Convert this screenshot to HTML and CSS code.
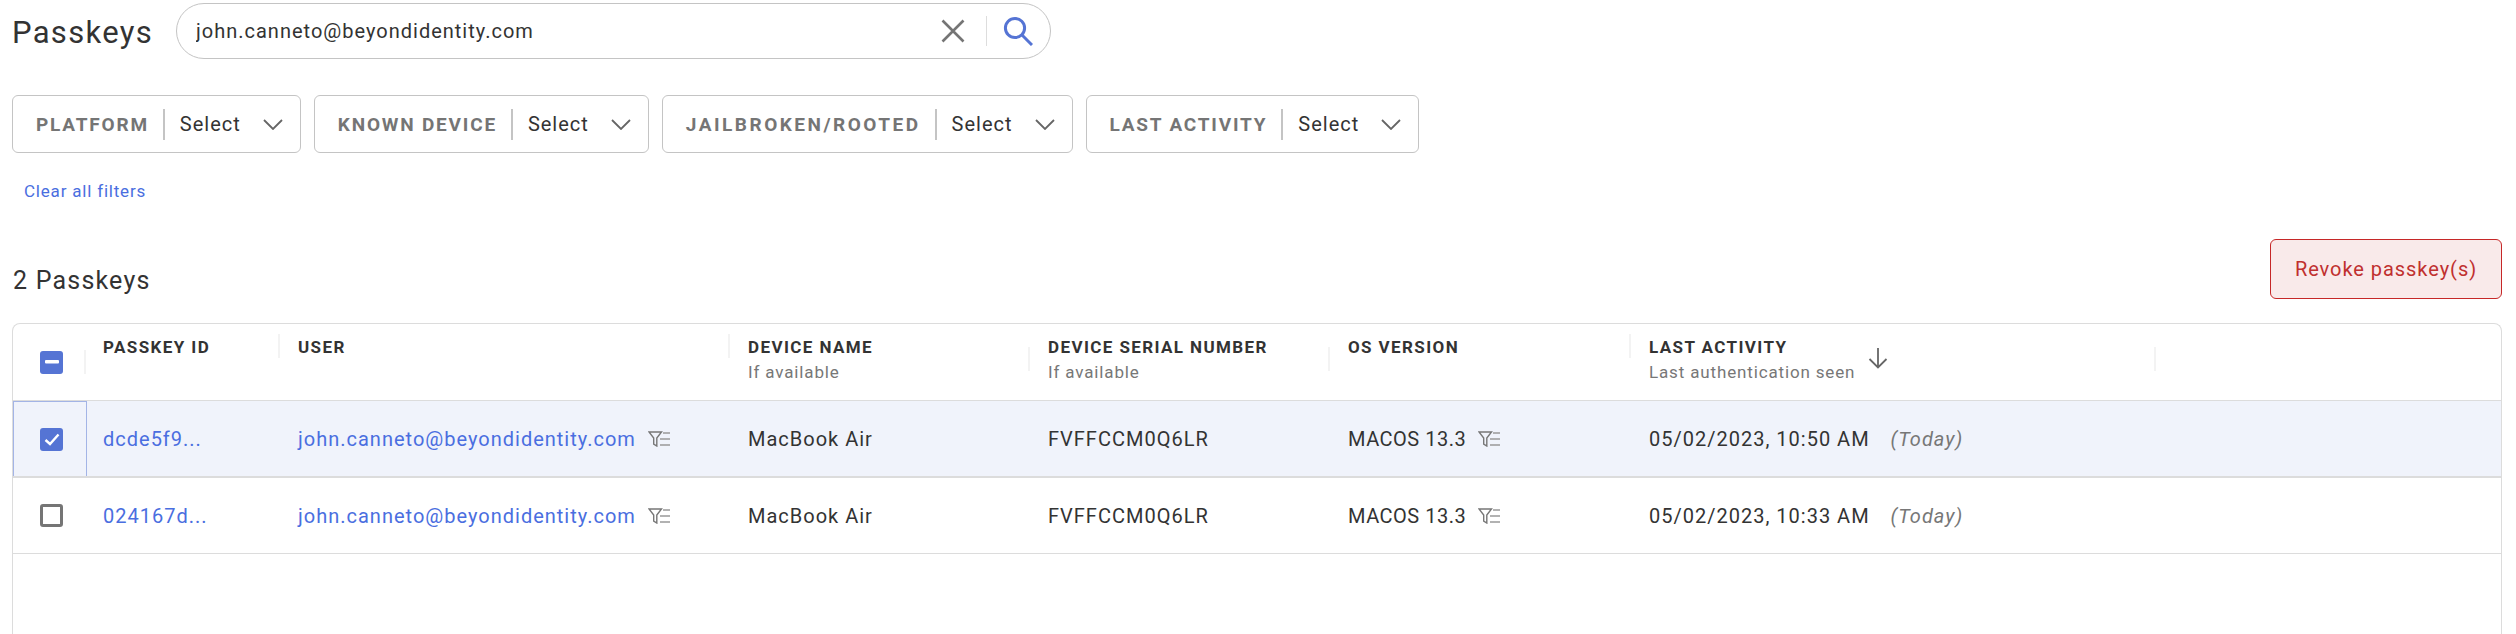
FILE: index.html
```html
<!DOCTYPE html>
<html>
<head>
  <title>Passkeys</title>
  <link rel="stylesheet" href="styles.css">
</head>
<body>
  <div id="page">
    <div class="top-row">
      <h1 class="page-title">Passkeys</h1>
      <div class="search">
        <input class="search-input" type="text" value="john.canneto@beyondidentity.com">
        <svg class="icon-clear" width="24" height="24" viewBox="0 0 24 24"><path d="M1.5 1.5L22.5 22.5M22.5 1.5L1.5 22.5" fill="none" stroke="#757575" stroke-width="2.6"/></svg>
        <span class="search-divider"></span>
        <svg class="icon-search" width="30" height="30" viewBox="0 0 30 30"><circle cx="12" cy="12" r="9.6" fill="none" stroke="#5574d4" stroke-width="3"/><path d="M19 19L29 29" fill="none" stroke="#5574d4" stroke-width="3"/></svg>
      </div>
    </div>

    <div class="filters">
      <div class="filter">
        <span class="filter-label">PLATFORM</span>
        <span class="filter-value">Select</span>
        <svg class="chevron" width="20" height="11" viewBox="0 0 20 11"><path d="M1 1L10 10L19 1" fill="none" stroke="#666" stroke-width="1.8"/></svg>
      </div>
      <div class="filter">
        <span class="filter-label">KNOWN DEVICE</span>
        <span class="filter-value">Select</span>
        <svg class="chevron" width="20" height="11" viewBox="0 0 20 11"><path d="M1 1L10 10L19 1" fill="none" stroke="#666" stroke-width="1.8"/></svg>
      </div>
      <div class="filter">
        <span class="filter-label filter-label-wide">JAILBROKEN/ROOTED</span>
        <span class="filter-value">Select</span>
        <svg class="chevron" width="20" height="11" viewBox="0 0 20 11"><path d="M1 1L10 10L19 1" fill="none" stroke="#666" stroke-width="1.8"/></svg>
      </div>
      <div class="filter">
        <span class="filter-label">LAST ACTIVITY</span>
        <span class="filter-value">Select</span>
        <svg class="chevron" width="20" height="11" viewBox="0 0 20 11"><path d="M1 1L10 10L19 1" fill="none" stroke="#666" stroke-width="1.8"/></svg>
      </div>
    </div>

    <a class="clear-link" href="#">Clear all filters</a>

    <div class="list-head">
      <h2 class="list-title">2 Passkeys</h2>
      <button class="revoke-btn">Revoke passkey(s)</button>
    </div>

    <div class="table">
      <div class="row head-row">
        <div class="cell check-cell sep sep-check">
          <span class="box box-on"><svg width="14" height="4" viewBox="0 0 14 4"><rect width="14" height="3.4" rx="1" fill="#fff"/></svg></span>
        </div>
        <div class="cell head-cell sep sep-top"><div class="head-name">PASSKEY ID</div></div>
        <div class="cell head-cell sep sep-top"><div class="head-name">USER</div></div>
        <div class="cell head-cell sep sep-mid"><div class="head-name">DEVICE NAME</div><div class="head-sub">If available</div></div>
        <div class="cell head-cell sep sep-mid"><div class="head-name">DEVICE SERIAL NUMBER</div><div class="head-sub">If available</div></div>
        <div class="cell head-cell sep sep-top"><div class="head-name">OS VERSION</div></div>
        <div class="cell head-cell sep sep-mid head-sort">
          <div><div class="head-name">LAST ACTIVITY</div><div class="head-sub">Last authentication seen</div></div>
          <svg class="icon-sort" width="20" height="21" viewBox="0 0 20 21"><path d="M10 0V19.5M1.5 11L10 19.5L18.5 11" fill="none" stroke="#666" stroke-width="1.8"/></svg>
        </div>
      </div>

      <div class="row data-row row-selected">
        <div class="cell check-cell check-focus">
          <span class="box box-on"><svg width="16" height="13" viewBox="0 0 16 13"><path d="M1.5 7L6 11L14.5 1.5" fill="none" stroke="#fff" stroke-width="2.4"/></svg></span>
        </div>
        <div class="cell data-cell"><a class="link" href="#">dcde5f9...</a></div>
        <div class="cell data-cell">
          <a class="link" href="#">john.canneto@beyondidentity.com</a>
          <svg class="icon-filter" width="22" height="16" viewBox="0 0 22 16"><path d="M1 1H13.5L8.8 7V15L5.7 13V7Z" fill="none" stroke="#777" stroke-width="1.4"/><path d="M15 2H22M12 8H22M12 14H22" fill="none" stroke="#999" stroke-width="1.4"/></svg>
        </div>
        <div class="cell data-cell">MacBook Air</div>
        <div class="cell data-cell">FVFFCCM0Q6LR</div>
        <div class="cell data-cell">
          <span class="os-value">MACOS 13.3</span>
          <svg class="icon-filter" width="22" height="16" viewBox="0 0 22 16"><path d="M1 1H13.5L8.8 7V15L5.7 13V7Z" fill="none" stroke="#777" stroke-width="1.4"/><path d="M15 2H22M12 8H22M12 14H22" fill="none" stroke="#999" stroke-width="1.4"/></svg>
        </div>
        <div class="cell data-cell"><span>05/02/2023, 10:50 AM</span><em class="today">(Today)</em></div>
      </div>

      <div class="row data-row">
        <div class="cell check-cell"><span class="box box-off"></span></div>
        <div class="cell data-cell"><a class="link" href="#">024167d...</a></div>
        <div class="cell data-cell">
          <a class="link" href="#">john.canneto@beyondidentity.com</a>
          <svg class="icon-filter" width="22" height="16" viewBox="0 0 22 16"><path d="M1 1H13.5L8.8 7V15L5.7 13V7Z" fill="none" stroke="#777" stroke-width="1.4"/><path d="M15 2H22M12 8H22M12 14H22" fill="none" stroke="#999" stroke-width="1.4"/></svg>
        </div>
        <div class="cell data-cell">MacBook Air</div>
        <div class="cell data-cell">FVFFCCM0Q6LR</div>
        <div class="cell data-cell">
          <span class="os-value">MACOS 13.3</span>
          <svg class="icon-filter" width="22" height="16" viewBox="0 0 22 16"><path d="M1 1H13.5L8.8 7V15L5.7 13V7Z" fill="none" stroke="#777" stroke-width="1.4"/><path d="M15 2H22M12 8H22M12 14H22" fill="none" stroke="#999" stroke-width="1.4"/></svg>
        </div>
        <div class="cell data-cell"><span>05/02/2023, 10:33 AM</span><em class="today">(Today)</em></div>
      </div>
    </div>
  </div>
</body>
</html>
```

FILE: styles.css
```css
html, body {
  margin: 0;
  height: 100%;
  overflow: hidden;
  background: #fff;
}

body {
  font-family: Roboto, "Liberation Sans", sans-serif;
  color: #333;
}

#page {
  padding: 3px 14px 0 12px;
}

.top-row {
  display: flex;
  align-items: center;
}

.page-title {
  margin: 0;
  width: 164px;
  padding-top: 2px;
  font-size: 31px;
  font-weight: 400;
  letter-spacing: 1.3px;
  color: #333;
}

.search {
  display: flex;
  align-items: center;
  box-sizing: border-box;
  width: 875px;
  height: 56px;
  border: 1px solid #c4c4c4;
  border-radius: 28px;
  padding-left: 19px;
}

.search-input {
  flex: 1;
  min-width: 0;
  border: none;
  outline: none;
  padding: 0;
  background: none;
  font-family: inherit;
  font-size: 20px;
  letter-spacing: 1px;
  color: #333;
}

.search-divider {
  width: 1px;
  height: 30px;
  margin: 0 16px 0 21px;
  background: #ddd;
}

.icon-search {
  margin-right: 17px;
}

.filters {
  display: flex;
  gap: 13px;
  margin-top: 36px;
}

.filter {
  display: flex;
  align-items: center;
  box-sizing: border-box;
  height: 58px;
  border: 1px solid #c4c4c4;
  border-radius: 6px;
  padding: 0 17px 0 23px;
}

.filter-label {
  padding-right: 14px;
  border-right: 2px solid #c4c4c4;
  line-height: 31px;
  font-size: 19px;
  font-weight: 700;
  letter-spacing: 1.8px;
  color: #757575;
}

.filter-label-wide {
  letter-spacing: 2.5px;
}

.filter-value {
  margin: 0 22px 0 15px;
  font-size: 20px;
  letter-spacing: 1px;
  color: #333;
}

.clear-link {
  display: block;
  margin: 28px 0 0 12px;
  line-height: 20px;
  font-size: 17px;
  letter-spacing: 0.8px;
  color: #4a6ee0;
  text-decoration: none;
}

.list-head {
  display: flex;
  justify-content: space-between;
  align-items: flex-end;
  margin-top: 38px;
}

.list-title {
  margin: 0 0 1px 1px;
  line-height: 34px;
  font-size: 25px;
  font-weight: 400;
  letter-spacing: 1.2px;
  color: #333;
}

.revoke-btn {
  box-sizing: border-box;
  width: 232px;
  height: 60px;
  border: 1px solid #c62828;
  border-radius: 6px;
  background: #f9eaea;
  font-family: inherit;
  font-size: 20px;
  letter-spacing: 0.95px;
  color: #c0302f;
}

.table {
  margin-top: 24px;
  height: 311px;
  border: 1px solid #dcdcdc;
  border-bottom: none;
  border-radius: 8px 8px 0 0;
}

.row {
  display: grid;
  grid-template-columns: 74px 198px 450px 300px 300px 301px 520px;
}

.head-row {
  height: 76px;
  border-bottom: 1px solid #dcdcdc;
}

.data-row {
  height: 75px;
  border-bottom: 1px solid #dcdcdc;
}

.row-selected {
  background: #f0f3fb;
  border-bottom-width: 2px;
}

.cell {
  box-sizing: border-box;
  position: relative;
  padding-left: 13px;
}

.check-cell {
  display: flex;
  align-items: center;
  padding-left: 27px;
}

.check-focus {
  border: 1px solid #a3b4e6;
  border-bottom: none;
  padding-left: 26px;
}

.box {
  display: flex;
  align-items: center;
  justify-content: center;
  box-sizing: border-box;
  width: 23px;
  height: 23px;
  border-radius: 3px;
}

.box-on {
  background: #5574d4;
}

.box-off {
  border: 3px solid #757575;
}

.head-cell {
  padding-top: 12px;
}

.head-row .cell:nth-child(2) {
  padding-left: 16px;
}

.head-name {
  line-height: 22px;
  font-size: 17px;
  font-weight: 700;
  letter-spacing: 1.4px;
  color: #333;
}

.head-sub {
  margin-top: 3px;
  line-height: 22px;
  font-size: 17px;
  letter-spacing: 0.85px;
  color: #777;
}

.head-sort {
  display: flex;
  align-items: flex-start;
}

.icon-sort {
  margin: 12px 0 0 13px;
}

/* little column dividers in the header, these sit at different heights */
.sep::after {
  content: "";
  position: absolute;
  right: 5px;
  width: 2px;
  height: 24px;
  background: #f3f3f3;
}

.sep-top::after {
  top: 10px;
}

.sep-mid::after {
  top: 23px;
}

.sep-check::after {
  top: 26px;
  right: 1px;
}

.head-sort::after {
  right: 0;
}

.data-cell {
  display: flex;
  align-items: center;
  font-size: 20px;
  letter-spacing: 1px;
  color: #333;
  white-space: nowrap;
}

.data-row .cell:nth-child(2) {
  padding-left: 16px;
}

.os-value {
  letter-spacing: 0.5px;
}

.link {
  color: #4a6ee0;
  text-decoration: none;
}

.icon-filter {
  margin-left: 12px;
}

.today {
  margin-left: 21px;
  color: #777;
}
```
